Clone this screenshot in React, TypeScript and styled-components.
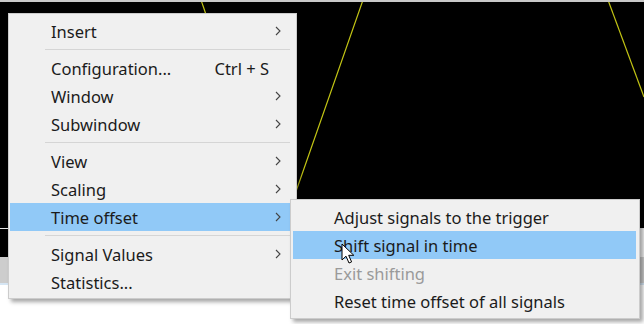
import React from "react";
import styled, { createGlobalStyle } from "styled-components";

const GlobalStyle = createGlobalStyle`
  html, body {
    margin: 0;
    padding: 0;
    background: #ffffff;
    overflow: hidden;
  }
`;

type Entry =
  | { kind: "item"; label: string; shortcut?: string; sub?: boolean; active?: boolean; disabled?: boolean }
  | { kind: "sep" };

const mainMenu: Entry[] = [
  { kind: "item", label: "Insert", sub: true },
  { kind: "sep" },
  { kind: "item", label: "Configuration...", shortcut: "Ctrl + S" },
  { kind: "item", label: "Window", sub: true },
  { kind: "item", label: "Subwindow", sub: true },
  { kind: "sep" },
  { kind: "item", label: "View", sub: true },
  { kind: "item", label: "Scaling", sub: true },
  { kind: "item", label: "Time offset", sub: true, active: true },
  { kind: "sep" },
  { kind: "item", label: "Signal Values", sub: true },
  { kind: "item", label: "Statistics..." },
];

const timeMenu: Entry[] = [
  { kind: "item", label: "Adjust signals to the trigger" },
  { kind: "item", label: "Shift signal in time", active: true },
  { kind: "item", label: "Exit shifting", disabled: true },
  { kind: "item", label: "Reset time offset of all signals" },
];

export default function App() {
  return (
    <>
      <GlobalStyle />
      <Screen>
        <TopRule />
        <Scope>
          <Trace viewBox="0 0 644 226" width={644} height={226}>
            <path d="M201 -2 C203 4 205 9 207 16" />
            <path d="M363 -2 L300 178 L250 320" />
            <path d="M608 -2 L644 95" />
          </Trace>
        </Scope>
        <Divider />
        <LowerStrip>
          <BlackCell />
          <LightCell />
        </LowerStrip>
        <Toolbar />
        <BlueRule />

        <MainMenu>
          {mainMenu.map((e, i) => renderEntry(e, i, 41))}
        </MainMenu>

        <SubMenu>
          {timeMenu.map((e, i) => renderEntry(e, i, 41))}
        </SubMenu>

        <Cursor viewBox="0 0 14 22" width={14} height={22}>
          <path
            d="M1 1 L1 17 L5 13.2 L8 20 L10.6 18.9 L7.7 12.3 L12.8 12.3 Z"
            fill="#ffffff"
            stroke="#000000"
            strokeWidth={1}
            strokeLinejoin="miter"
          />
        </Cursor>
      </Screen>
    </>
  );
}

function renderEntry(e: Entry, i: number, indent: number) {
  if (e.kind === "sep") return <Separator key={i} />;
  return (
    <Row key={i} $active={e.active} $disabled={e.disabled} $indent={indent}>
      <Label>{e.label}</Label>
      {e.shortcut && <Shortcut>{e.shortcut}</Shortcut>}
      {e.sub && (
        <Chevron viewBox="0 0 6 10" width={6} height={10}>
          <polyline points="1,1 5,5 1,9" />
        </Chevron>
      )}
    </Row>
  );
}

const Screen = styled.div`
  position: relative;
  width: 644px;
  height: 324px;
  overflow: hidden;
  display: flex;
  flex-direction: column;
  font-family: "Noto Sans", "Open Sans", sans-serif;
`;

const TopRule = styled.div`
  height: 2px;
  background: #c9c9c9;
`;

const Scope = styled.div`
  position: relative;
  height: 226px;
  background: #000000;
`;

const Trace = styled.svg`
  display: block;
  fill: none;
  stroke: #c2c414;
  stroke-width: 1.2;
`;

const Divider = styled.div`
  height: 1px;
  background: #e6e6e6;
`;

const LowerStrip = styled.div`
  height: 28px;
  display: flex;
`;

const BlackCell = styled.div`
  flex: 1;
  background: #000000;
`;

const LightCell = styled.div`
  width: 6px;
  background: #f4f4f4;
`;

const Toolbar = styled.div`
  height: 26px;
  background: #cdcdcd;
`;

const BlueRule = styled.div`
  height: 2px;
  background: #d6e6f4;
`;

const MenuBox = styled.div`
  position: absolute;
  box-sizing: border-box;
  background: #f0f0f0;
  border: 1px solid #cccccc;
  box-shadow: 3px 3px 4px rgba(0, 0, 0, 0.35);
  display: flex;
  flex-direction: column;
`;

const MainMenu = styled(MenuBox)`
  left: 8px;
  top: 13px;
  width: 289px;
  padding: 3px 6px 2px 1px;
`;

const SubMenu = styled(MenuBox)`
  left: 290px;
  top: 199px;
  width: 350px;
  padding: 3px 3px 3px 2px;
`;

const Row = styled.div<{ $active?: boolean; $disabled?: boolean; $indent: number }>`
  height: 28px;
  display: flex;
  align-items: center;
  padding: 0 9px 0 ${(p) => p.$indent}px;
  font-size: 16.5px;
  color: ${(p) => (p.$disabled ? "#9a9a9a" : "#1b1b1b")};
  background: ${(p) => (p.$active ? "#91c9f7" : "transparent")};
`;

const Label = styled.span`
  flex: 1;
  white-space: nowrap;
`;

const Shortcut = styled.span`
  margin-right: 12px;
  white-space: nowrap;
`;

const Chevron = styled.svg`
  fill: none;
  stroke: #444444;
  stroke-width: 1.1;
`;

const Separator = styled.div`
  height: 9px;
  margin-left: 35px;
  display: flex;
  align-items: center;
  &::before {
    content: "";
    flex: 1;
    height: 1px;
    background: #d5d5d5;
  }
`;

const Cursor = styled.svg`
  position: absolute;
  left: 341px;
  top: 243px;
`;
